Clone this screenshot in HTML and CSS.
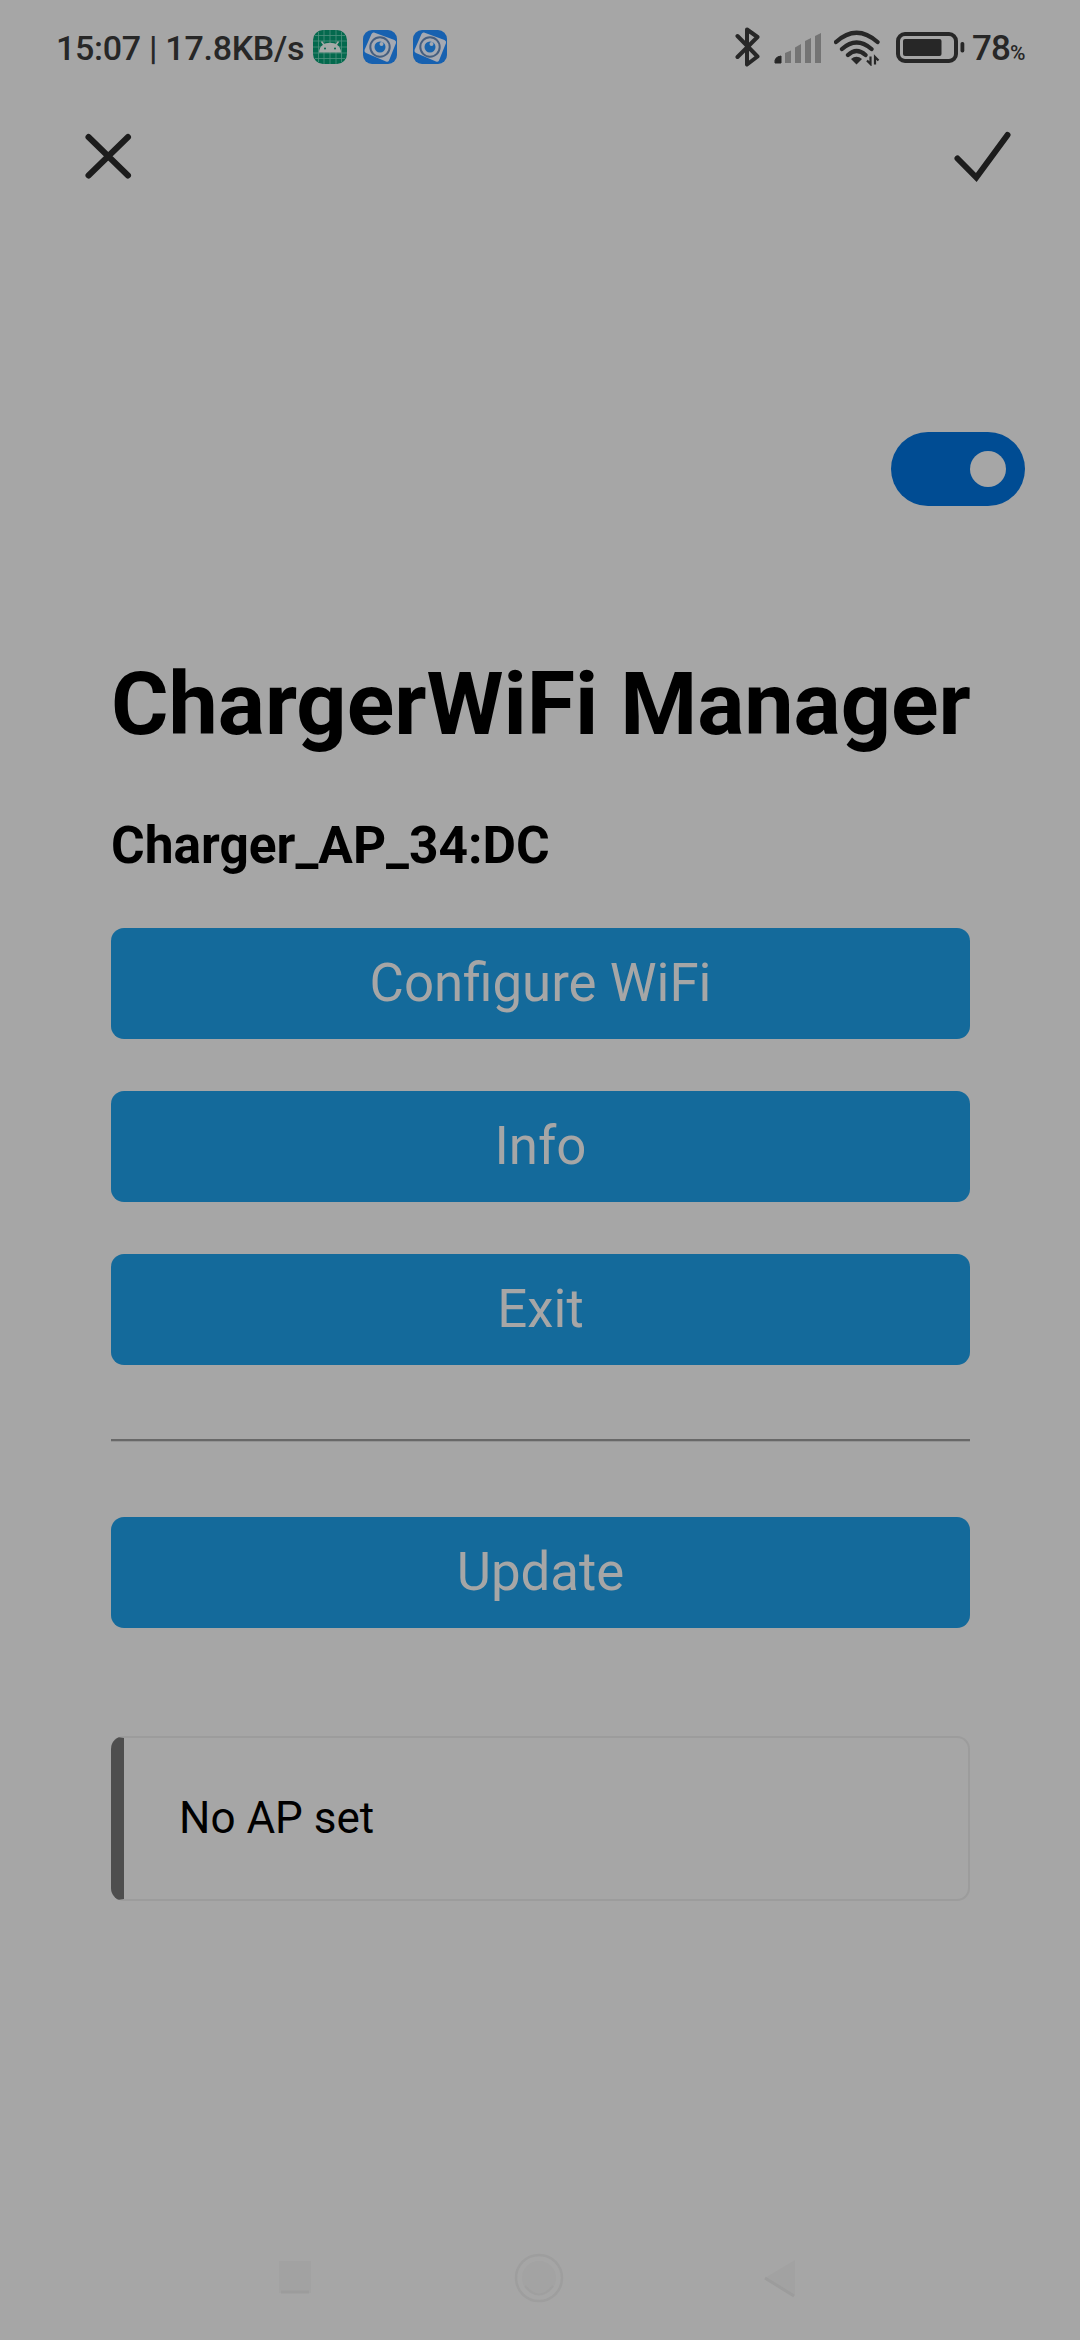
FILE: index.html
```html
<!DOCTYPE html>
<html lang="en">
<head>
<meta charset="utf-8">
<title>ChargerWiFi Manager</title>
<link rel="stylesheet" href="styles.css">
</head>
<body>
<header class="status-bar">
  <span class="clock">15:07 | 17.8KB/s</span>
  <div class="notifications">
    <svg class="app-icon" viewBox="0 0 34 34">
      <rect width="34" height="34" rx="10" fill="#03694d"/>
      <path d="M5.500 2V32M11 0V34M17 0V34M23 0V34M28.500 2V32M2 5.500H32M0 11H34M0 17H34M0 23H34M2 28.500H32" stroke="#4f907e" stroke-width=".8"/>
      <path d="M8.500 11.500 11 15M25.500 11.500 23 15" stroke="#a5aaa8" stroke-width="1.500" fill="none"/>
      <path d="M6 22.500C6 9.500 28 9.500 28 22.500Z" fill="#a5aaa8"/>
      <circle cx="12" cy="18.500" r="1" fill="#03694d"/><circle cx="22" cy="18.500" r="1" fill="#03694d"/>
    </svg>
    <svg class="app-icon" viewBox="0 0 34 34">
      <rect width="34" height="34" rx="9" fill="#1761b0"/>
      <path d="M11 2.500 31.500 10Q33.500 11 33 13L26 30.500Q25 32.500 23 31.500L3 23Q1 22 1.500 20L8.500 4Q9.500 2 11 2.500Z" fill="#a5a9b2"/>
      <circle cx="17" cy="17" r="9.700" fill="none" stroke="#455f80" stroke-width="2"/>
      <circle cx="17" cy="17" r="5.500" fill="#1964ad"/>
      <circle cx="18.500" cy="14" r="2" fill="#a5a9b2"/>
    </svg>
    <svg class="app-icon" viewBox="0 0 34 34">
      <rect width="34" height="34" rx="9" fill="#1761b0"/>
      <path d="M11 2.500 31.500 10Q33.500 11 33 13L26 30.500Q25 32.500 23 31.500L3 23Q1 22 1.500 20L8.500 4Q9.500 2 11 2.500Z" fill="#a5a9b2"/>
      <circle cx="17" cy="17" r="9.700" fill="none" stroke="#455f80" stroke-width="2"/>
      <circle cx="17" cy="17" r="5.500" fill="#1964ad"/>
      <circle cx="18.500" cy="14" r="2" fill="#a5a9b2"/>
    </svg>
  </div>
  <div class="system">
    <svg class="bluetooth" viewBox="0 0 26 40">
      <path d="M2.500 9 22.500 29.500 12 37.500V2.500L22.500 10 2.500 30" fill="none" stroke="#272727" stroke-width="4" stroke-linejoin="round" stroke-linecap="round"/>
    </svg>
    <svg class="signal" viewBox="0 0 48 32">
      <path d="M1 31Q0 25 7 24V31Z" fill="#272727" stroke="#272727" stroke-width="1" stroke-linejoin="round"/>
      <path d="M11 31V21L17 18.500V31ZM21 31V15.500L27 12V31ZM31 31V9L37 6V31ZM41 31V4L47 1V31Z" fill="#747474"/>
    </svg>
    <svg class="wifi" viewBox="0 0 46 36">
      <path d="M2 12Q22.500-6.500 43.500 12M8 19Q22.500 6 37.500 19M14 25Q22.500 17 31.500 25" fill="none" stroke="#272727" stroke-width="4.300" stroke-linecap="round"/>
      <path d="M17 29Q22.500 24.500 28 29L22.500 34.500Z" fill="#272727"/>
      <path d="M36.500 26.500V34L33 30.500M41 34.500V27L44.500 30.500" fill="none" stroke="#272727" stroke-width="2.200"/>
    </svg>
    <svg class="battery" viewBox="0 0 70 31">
      <rect x="2" y="2" width="58" height="27" rx="7" fill="none" stroke="#272727" stroke-width="4"/>
      <rect x="7" y="7" width="38.500" height="17" rx="2" fill="#272727"/>
      <rect x="64.500" y="10" width="3.800" height="10.500" rx="1.700" fill="#272727"/>
    </svg>
    <span class="level">78</span><span class="percent">%</span>
  </div>
</header>
<nav class="app-bar">
  <svg class="action" viewBox="0 0 60 60"><path d="M9.500 11 49 49.500M49 11 9.500 49.500" fill="none" stroke="#1c1c1c" stroke-width="6" stroke-linecap="round"/></svg>
  <svg class="action" viewBox="0 0 60 60"><path d="M5.500 32.500 24.300 51.500 55.500 9" fill="none" stroke="#1c1c1c" stroke-width="6" stroke-linecap="round"/></svg>
</nav>
<div class="toggle-row"><div class="toggle"><div class="knob"></div></div></div>
<main class="portal">
  <h1>ChargerWiFi Manager</h1>
  <h3>Charger_AP_34:DC</h3>
  <div class="menu">
    <button>Configure WiFi</button>
    <button>Info</button>
    <button>Exit</button>
  </div>
  <div class="divider"></div>
  <button>Update</button>
  <div class="msg">No AP set</div>
</main>
<footer class="nav-bar">
  <svg viewBox="0 0 50 56"><rect x="8" y="11" width="32" height="32" fill="#a2a2a2"/><path d="M10 42H38" stroke="#9c9c9c" stroke-width="3"/></svg>
  <svg viewBox="0 0 50 56"><circle cx="25" cy="28" r="23" fill="none" stroke="#9e9e9e" stroke-width="2.500"/><circle cx="25" cy="28" r="17" fill="#a3a3a3"/><path d="M11 36Q25 53 39 36" fill="none" stroke="#9f9f9f" stroke-width="2"/></svg>
  <svg viewBox="0 0 50 56"><path d="M8 28 38 10V46Z" fill="#a2a2a2"/><path d="M8 28 37 46" stroke="#9c9c9c" stroke-width="3"/></svg>
</footer>
</body>
</html>
```
FILE: styles.css
```css
* { box-sizing: border-box; }

body {
  display: flex;
  flex-direction: column;
  width: 1080px;
  height: 2340px;
  margin: 0;
  overflow: hidden;
  background: #a6a6a6;
  color: #000;
  font-family: Roboto, "Liberation Sans", sans-serif;
}

svg { display: block; flex: none; }

.status-bar {
  display: flex;
  align-items: center;
  height: 94px;
  padding: 0 55px 0 56px;
  color: #272727;
}

.clock {
  width: 257px;
  margin-top: 2px;
  font-size: 34px;
  font-weight: 500;
  letter-spacing: -0.28px;
  line-height: 40px;
  white-space: nowrap;
}

.notifications { display: flex; gap: 16px; }
.app-icon { width: 34px; height: 34px; }

.system { display: flex; align-items: center; margin-left: auto; }
.bluetooth { width: 26px; height: 40px; margin-right: 13px; }
.signal { width: 48px; height: 32px; margin: 2px 12px 0 0; }
.wifi { width: 46px; height: 36px; margin: 2px 16px 0 0; }
.battery { width: 70px; height: 31px; margin-right: 6px; }
.level { width: 38px; font-size: 35px; font-weight: 500; letter-spacing: -1px; line-height: 40px; margin-top: 3px; }
.percent { width: 15px; font-size: 21px; font-weight: 500; line-height: 22px; margin-top: 11px; }

.app-bar {
  display: flex;
  justify-content: space-between;
  align-items: center;
  height: 124px;
  padding: 0 68px 0 79px;
}
.action { width: 60px; height: 60px; }

.toggle-row {
  display: flex;
  justify-content: flex-end;
  padding: 214px 55px 0 0;
}
.toggle {
  display: flex;
  align-items: center;
  justify-content: flex-end;
  width: 134px;
  height: 74px;
  padding-right: 19px;
  border-radius: 37px;
  background: #004c93;
}
.knob { width: 36px; height: 36px; border-radius: 50%; background: #a6a6a6; }

.portal {
  display: flex;
  flex-direction: column;
  width: 859px;
  margin: 154px 0 0 111px;
}

h1 { margin: 0; font-size: 88px; line-height: 88px; white-space: nowrap; }
h3 { margin: 72px 0 56px; font-size: 51.48px; line-height: 52px; }

.menu { display: flex; flex-direction: column; gap: 52px; }

button {
  width: 100%;
  height: 111px;
  padding: 0;
  border: 0;
  border-radius: 13px;
  background: #146a9b;
  color: #a6a6a6;
  font: 52.8px/111px Roboto, "Liberation Sans", sans-serif;
}

.divider {
  height: 3px;
  margin: 74px 0 75px;
  border-top: 2px solid #686868;
  border-bottom: 1px solid #949494;
}

.msg {
  height: 165px;
  margin-top: 108px;
  padding-left: 55px;
  border: 2px solid #9c9c9c;
  border-left: 13px solid #4e4e4e;
  border-radius: 13px;
  font-size: 44px;
  line-height: 161px;
}

.nav-bar {
  display: flex;
  justify-content: space-between;
  margin-top: auto;
  padding: 0 273px 34px 271px;
}
.nav-bar svg { width: 50px; height: 56px; }
```
